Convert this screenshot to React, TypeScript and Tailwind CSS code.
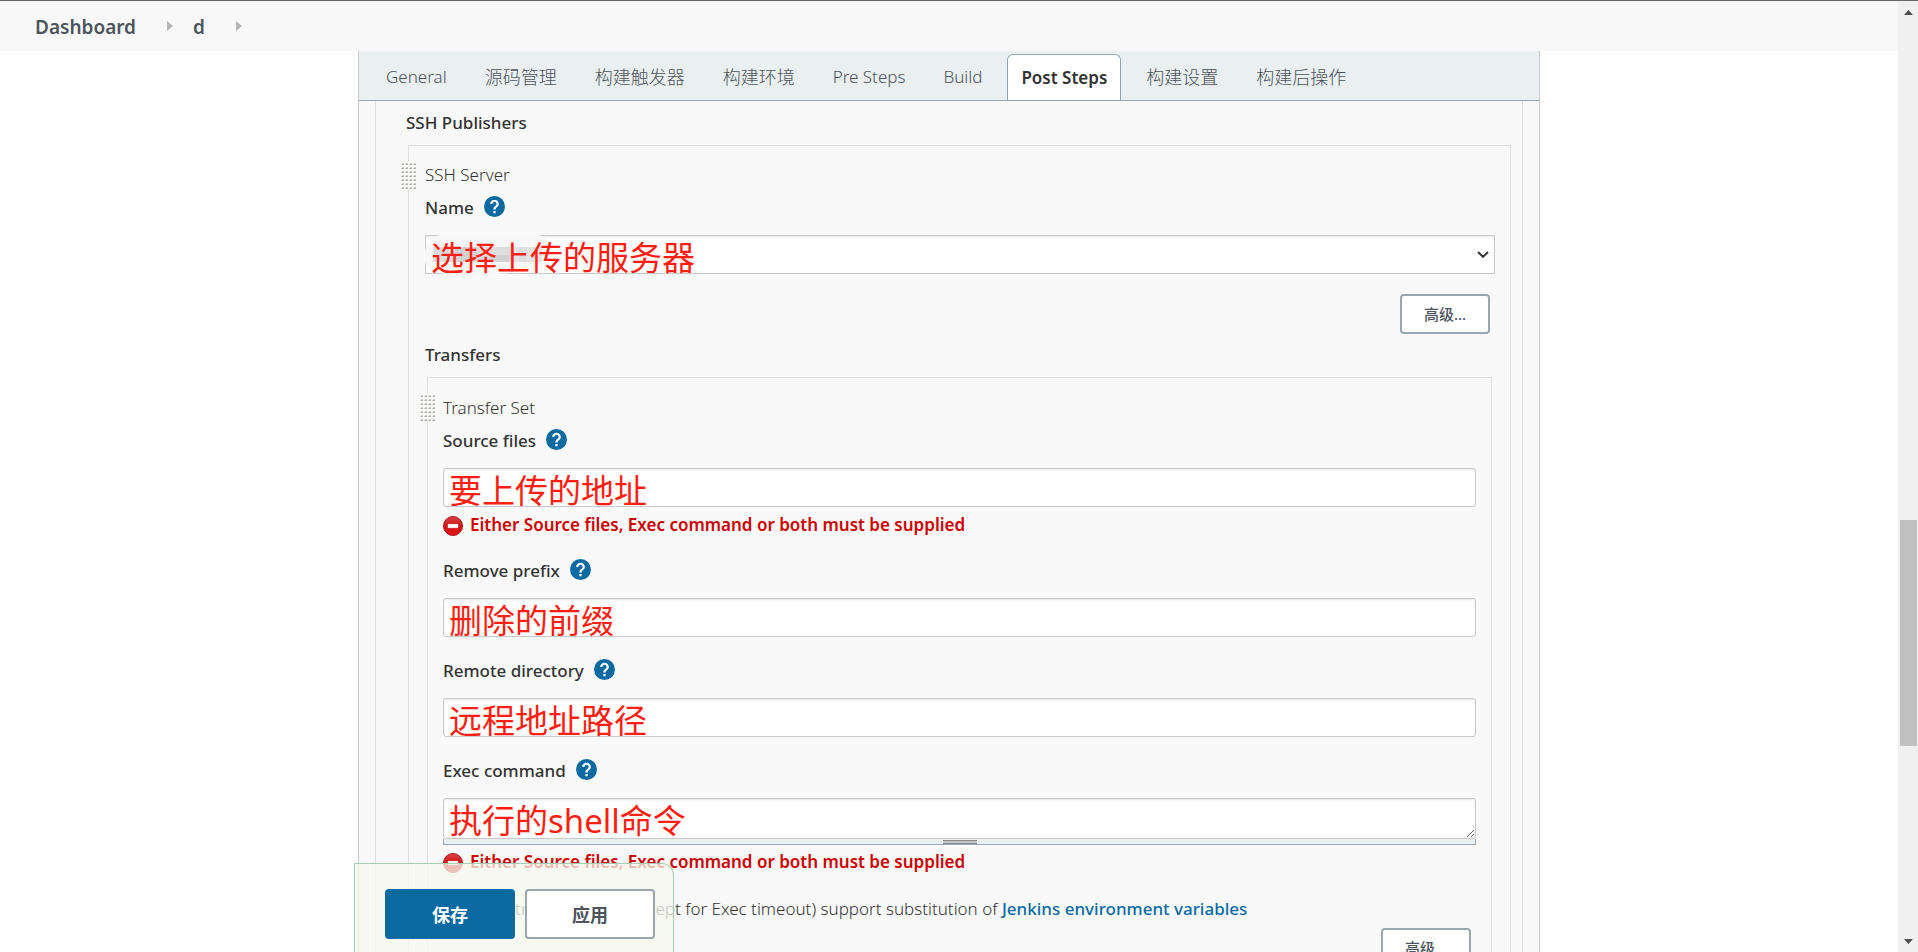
import type { ReactNode } from "react";

const HAN = "font-['Noto_Sans','Noto_Sans_CJK_SC',sans-serif]";

const tabs = [
  { name: "General" },
  { name: "源码管理", han: true },
  { name: "构建触发器", han: true },
  { name: "构建环境", han: true },
  { name: "Pre Steps" },
  { name: "Build" },
  { name: "Post Steps" },
  { name: "构建设置", han: true },
  { name: "构建后操作", han: true },
];

function Crumb({ children }: { children: ReactNode }) {
  return (
    <li className="flex items-center">
      <a href="#" className="pt-[3px] text-[19px] font-semibold text-[#4d545d]">{children}</a>
      <svg className="mr-5 ml-[31px] h-[10px] w-[6px]" viewBox="0 0 6 10" aria-hidden="true">
        <path d="M0 0 6 5 0 10Z" fill="#b5b5b5" />
      </svg>
    </li>
  );
}

function HelpButton({ topic }: { topic: string }) {
  return (
    <button type="button" aria-label={`Help for feature: ${topic}`} className="h-[21px] w-[21px]">
      <svg viewBox="2 2 20 20" className="h-[21px] w-[21px]" aria-hidden="true">
        <circle cx="12" cy="12" r="10" fill="#0b6aa2" />
        <path
          d="M10.900 16.200h2.200v2.200h-2.200zM12 5.500c-2.300 0-4.100 1.800-4.100 4.100h2.100c0-1.200.9-2.100 2-2.100s2 .9 2 2.100c0 2-3.100 1.900-3.100 5.300h2.200c0-2.300 3-2.700 3-5.300 0-2.300-1.800-4.100-4.100-4.100z"
          fill="#fff"
        />
      </svg>
    </button>
  );
}

function FieldLabel({ id, children }: { id: string; children: string }) {
  return (
    <div className="flex h-[21px] items-center gap-[10px]">
      <label htmlFor={id} className="pt-[2px] text-[17px] leading-[21px] font-medium text-[#333]">{children}</label>
      <HelpButton topic={children} />
    </div>
  );
}

function Note({ children }: { children: string }) {
  return (
    <span className="pointer-events-none absolute top-0 left-[6px] text-[33px] leading-[46px] whitespace-nowrap text-[#ff1e0f]">
      {children}
    </span>
  );
}

function TextField({ id, label, note }: { id: string; label: string; note: string }) {
  return (
    <div>
      <FieldLabel id={id}>{label}</FieldLabel>
      <div className="relative mt-[18px]">
        <input
          id={id}
          type="text"
          className="block h-[39px] w-full rounded-[3px] border border-[#c9c9c9] bg-white px-2 shadow-[inset_0_1px_2px_rgba(0,0,0,0.1)]"
        />
        <Note>{note}</Note>
      </div>
    </div>
  );
}

function ErrorLine() {
  return (
    <p className="flex h-5 items-center gap-[7px] text-[17px] leading-[20px] font-semibold text-[#cc0000]">
      <svg className="h-5 w-5 shrink-0" viewBox="0 0 20 20" aria-hidden="true">
        <defs>
          <linearGradient id="stop" x1="0" y1="0" x2="0" y2="1">
            <stop offset="0" stopColor="#d9474a" />
            <stop offset="0.5" stopColor="#d80f12" />
            <stop offset="1" stopColor="#e01a1a" />
          </linearGradient>
        </defs>
        <circle cx="10" cy="10" r="9.500" fill="url(#stop)" stroke="#a81416" />
        <rect x="4.500" y="7.700" width="11" height="4.600" rx="1" fill="#fff" stroke="#b31515" strokeWidth="0.600" />
      </svg>
      <span className="pb-[2px]">Either Source files, Exec command or both must be supplied</span>
    </p>
  );
}

function DragHandle() {
  return (
    <svg className="absolute top-4 -left-2 h-[27px] w-[15px] bg-[#f9f9f9]" aria-hidden="true">
      <defs>
        <pattern id="grip" width="4" height="4" patternUnits="userSpaceOnUse">
          <rect x="1" y="2" width="2" height="1" fill="#b0b0a8" />
          <rect x="0" y="2" width="1" height="1" fill="#d6d6d2" />
          <rect x="1" y="1" width="2" height="1" fill="#cbcbc6" />
        </pattern>
      </defs>
      <rect width="15" height="27" fill="url(#grip)" />
    </svg>
  );
}

function AdvancedButton() {
  return (
    <button type="button" className="h-10 w-[90px] shrink-0 rounded-[4px] border-2 border-[#98a6af] bg-white text-[15px] font-medium text-[#4d545d]">
      高级...
    </button>
  );
}

export default function App() {
  return (
    <div className={`flex h-screen overflow-hidden border-t border-[#666] bg-white text-[17px] text-[#333] ${HAN}`}>
      <div className="relative flex min-w-0 flex-1 flex-col">
        <header className="h-[50px] shrink-0 bg-[#f8f8f8]">
          <nav aria-label="Breadcrumb">
            <ol className="flex h-[50px] items-center pl-[35px]">
              <Crumb>Dashboard</Crumb>
              <Crumb>d</Crumb>
            </ol>
          </nav>
        </header>

        <main className="mx-auto flex min-h-0 w-full max-w-[1182px] flex-1 flex-col border-x border-[#c9c9c9] bg-[#f9f9f9]">
          <nav aria-label="Sections" className="flex h-[50px] shrink-0 items-end gap-3 border-b border-[#8fa5b0] bg-[#eaeff2] pl-[14px]">
            {tabs.map(({ name, han }) =>
              name === "Post Steps" ? (
                <a key={name} href="#" aria-current="true" className="flex h-[46px] items-center rounded-t-[6px] border border-b-0 border-[#8fa5b0] bg-white px-[13px] text-[17px] font-semibold whitespace-nowrap text-[#333]">
                  {name}
                </a>
              ) : (
                <a
                  key={name}
                  href="#"
                  className={`flex h-[46px] items-center px-[13px] font-light whitespace-nowrap text-[#4d545d] ${han ? "text-[18px]" : "text-[17px]"}`}
                >
                  {name}
                </a>
              ),
            )}
          </nav>

          <form className="mx-4 min-h-0 flex-1 overflow-hidden border-x border-[#dedede] pr-[11px] pl-[30px]">
            <h2 className="pt-3 text-[17px] leading-[20px] font-medium">SSH Publishers</h2>

            <section className="relative mt-3 ml-[2px] border border-b-0 border-[#dedede] pr-[15px] pl-4">
              <DragHandle />
              <p className="pt-[19px] text-[17px] leading-[20px] font-light">SSH Server</p>
              <div className="mt-[11px]">
                <FieldLabel id="server">Name</FieldLabel>
                <div className="relative mt-[18px]">
                  <select
                    id="server"
                    className="block h-[39px] w-full appearance-none border border-[#c9c9c9] bg-white shadow-[inset_0_1px_2px_rgba(0,0,0,0.1)]"
                  />
                  <svg className="pointer-events-none absolute top-4 right-[6px] h-[7px] w-3" viewBox="0 0 12 7" aria-hidden="true">
                    <path d="M1 1 6 5.800 11 1" fill="none" stroke="#333" strokeWidth="2" />
                  </svg>
                  <svg className="pointer-events-none absolute top-0 left-0 h-10 w-[128px]" viewBox="0 0 128 40" aria-hidden="true">
                    <path d="M14 0H113Q124 2 124 14V26Q118 36 96 37L62 40H30Q0 38 0 26V16Q2 3 14 0Z" fill="#f7f7f7" />
                    <path d="M8 12H117V27H8Z" fill="#dedede" />
                    <path d="M30 12H52V27H30ZM64 20H84V27H64Z" fill="#d2d2d2" />
                    <path d="M86 12H94V27H86ZM102 12H117V27H102Z" fill="#e4e4e4" />
                  </svg>
                  <Note>选择上传的服务器</Note>
                </div>
              </div>
              <div className="mt-5 flex justify-end pr-[5px]">
                <AdvancedButton />
              </div>

              <h3 className="mt-[11px] text-[17px] leading-[20px] font-medium">Transfers</h3>

              <section className="relative mt-3 mr-[3px] ml-[2px] border border-b-0 border-[#dedede] pr-[15px] pl-[15px]">
                <DragHandle />
                <p className="pt-5 text-[17px] leading-[20px] font-light">Transfer Set</p>
                <div className="mt-[11px] flex flex-col">
                  <TextField id="source" label="Source files" note="要上传的地址" />
                  <div className="mt-[9px] mb-[23px]">
                    <ErrorLine />
                  </div>
                  <TextField id="prefix" label="Remove prefix" note="删除的前缀" />
                  <div className="h-[22px]" />
                  <TextField id="remote" label="Remote directory" note="远程地址路径" />
                  <div className="h-[22px]" />
                  <FieldLabel id="exec">Exec command</FieldLabel>
                  <div className="relative mt-[18px]">
                    <textarea
                      id="exec"
                      className="block h-[41px] w-full resize rounded-[3px] border border-[#c9c9c9] bg-white px-2 shadow-[inset_0_1px_2px_rgba(0,0,0,0.1)]"
                    />
                    <div className="flex h-[6px] items-center justify-center border border-t-0 border-[#98a6af] bg-[#eaeff2]">
                      <div className="h-1 w-[34px] border-y border-[#888] bg-[#c4c4c4]" />
                    </div>
                    <Note>执行的shell命令</Note>
                  </div>
                  <div className="mt-2">
                    <ErrorLine />
                  </div>
                  <p className="mt-[26px] text-[17px] leading-[20px] font-light">
                    All of the transfer fields (except for Exec timeout) support substitution of{" "}
                    <a href="#" className="font-medium text-[#0b6aa2]">Jenkins environment variables</a>
                  </p>
                  <div className="mt-[9px] flex justify-end pr-[5px]">
                    <AdvancedButton />
                  </div>
                </div>
              </section>
            </section>
          </form>
        </main>

        <div className="absolute bottom-0 left-[354px] flex h-[89px] gap-[10px] rounded-tr-[12px] border border-b-0 border-[#a5ccb5] bg-[#f6f8ee]/75 pt-[25px] pr-[18px] pl-[30px]">
          <button type="submit" className="h-[50px] w-[130px] rounded-[4px] bg-[#0b6aa2] pt-[2px] text-[18px] font-bold text-white">保存</button>
          <button type="button" className="h-[50px] w-[130px] rounded-[4px] border-2 border-[#98a6af] bg-white pt-[2px] text-[18px] font-bold text-[#4d545d]">应用</button>
        </div>
      </div>

      <div className="flex w-5 shrink-0 flex-col items-center justify-between bg-[#f0f0f0] pt-[9px] pb-2" aria-hidden="true">
        <svg className="h-[5px] w-[9px]" viewBox="0 0 9 5"><path d="M4.500 0 9 5H0Z" fill="#505050" /></svg>
        <div className="mt-[312px] h-[226px] w-[17px] bg-[#c1c1c1]" />
        <svg className="h-[5px] w-[9px]" viewBox="0 0 9 5"><path d="M0 0H9L4.500 5Z" fill="#505050" /></svg>
      </div>
    </div>
  );
}
